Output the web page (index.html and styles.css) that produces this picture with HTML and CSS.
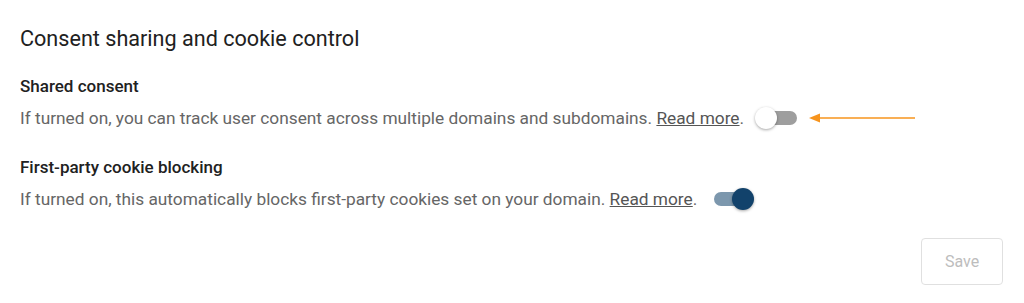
FILE: index.html
```html
<!DOCTYPE html>
<html lang="en">
<head>
<meta charset="UTF-8">
<title>Consent sharing and cookie control</title>
<link rel="stylesheet" href="styles.css">
</head>
<body>

<div class="panel">
    <h2 class="panel-title">Consent sharing and cookie control</h2>

    <div class="setting">
        <h3>Shared consent</h3>
        <div class="setting-row">
            <p>If turned on, you can track user consent across multiple domains and subdomains. <a href="#">Read more</a>.</p>
            <span class="switch"><span class="knob"></span></span>
            <svg class="arrow" width="108" height="12" viewBox="0 0 108 12">
                <path d="M10 6 H106" stroke="#f7941d" stroke-width="1.5"/>
                <path d="M0 6 L11 1.5 L11 10.5 Z" fill="#f7941d"/>
            </svg>
        </div>
    </div>

    <div class="setting">
        <h3>First-party cookie blocking</h3>
        <div class="setting-row">
            <p>If turned on, this automatically blocks first-party cookies set on your domain. <a href="#">Read more</a>.</p>
            <span class="switch on"><span class="knob"></span></span>
        </div>
    </div>

    <div class="actions">
        <button class="save-button" disabled>Save</button>
    </div>
</div>

</body>
</html>
```

FILE: styles.css
```css
body {
    font-family: Roboto, "Liberation Sans", sans-serif;
    background-color: #fff;
    color: #212121;
    margin: 0;
    padding: 0;
}
.panel {
    padding: 25px 20px 0 20px;
}
.panel-title {
    font-size: 21.6px;
    font-weight: 400;
    margin: 0 0 22px 0;
    line-height: 28px;
}
.setting h3 {
    font-size: 17px;
    font-weight: 500;
    margin: 0;
    line-height: 22px;
}
.setting-row {
    display: flex;
    align-items: center;
    height: 42px;
    margin-bottom: 17px;
}
.setting-row p {
    margin: 0;
    font-size: 17.3px;
    color: #666;
}
.setting-row a {
    color: #555;
    text-decoration: underline;
}
.switch {
    position: relative;
    display: inline-block;
    width: 36px;
    height: 14px;
    border-radius: 7px;
    background-color: #9e9e9e;
    margin-left: 17px;
}
.switch .knob {
    position: absolute;
    top: -4px;
    left: -6px;
    width: 22px;
    height: 22px;
    border-radius: 50%;
    background-color: #fff;
    box-shadow: 0 1px 3px rgba(0, 0, 0, 0.35);
}
.switch.on {
    background-color: #7c97ad;
}
.switch.on .knob {
    left: 18px;
    background-color: #12426b;
}
.arrow {
    margin-left: 12px;
}
.actions {
    display: flex;
    justify-content: flex-end;
    margin-top: 18px;
    margin-right: 1px;
}
.save-button {
    font-family: Roboto, "Liberation Sans", sans-serif;
    font-size: 16px;
    width: 82px;
    height: 47px;
    background-color: #fff;
    color: #bdbdbd;
    border: 1px solid #e0e0e0;
    border-radius: 4px;
}
```
